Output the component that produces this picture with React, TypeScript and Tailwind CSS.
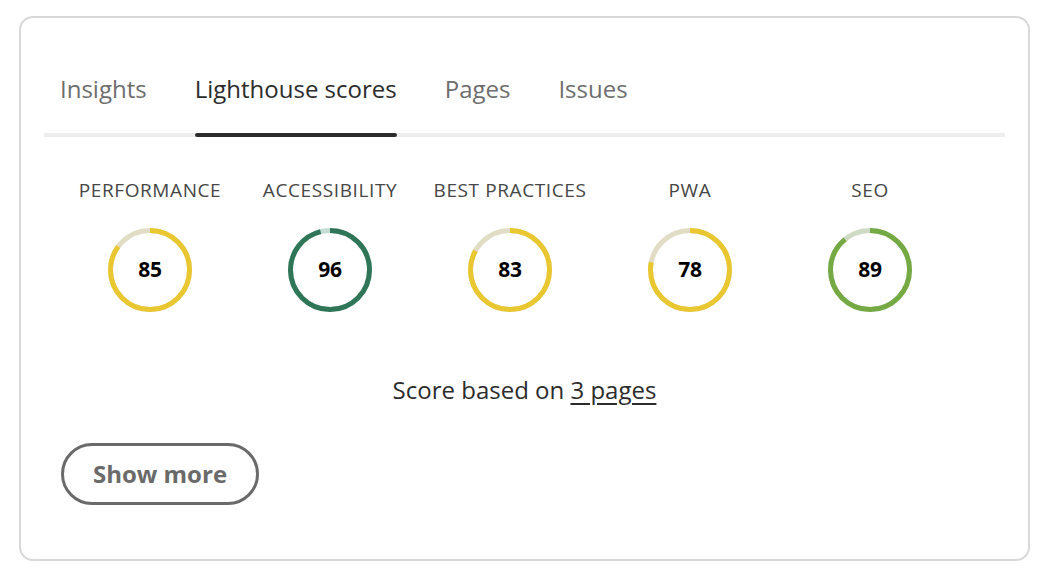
import { useState } from "react";

const tabs = ["Insights", "Lighthouse scores", "Pages", "Issues"];

const scores = [
  { label: "PERFORMANCE", value: 85, color: "#e9c731", track: "#e1ddc5" },
  { label: "ACCESSIBILITY", value: 96, color: "#2e7657", track: "#c5ddd3" },
  { label: "BEST PRACTICES", value: 83, color: "#e9c731", track: "#e1ddc5" },
  { label: "PWA", value: 78, color: "#e9c731", track: "#e1ddc5" },
  { label: "SEO", value: 89, color: "#74a944", track: "#cfdac4" },
];

const Ring = ({ value, color, track }: { value: number; color: string; track: string }) => {
  const r = 39.5;
  const c = 2 * Math.PI * r;
  return (
    <div className="relative h-[84px] w-[84px]">
      <svg width="84" height="84" viewBox="0 0 84 84" className="-rotate-90">
        <circle cx="42" cy="42" r={r} fill="none" stroke={track} strokeWidth="5" />
        <circle
          cx="42"
          cy="42"
          r={r}
          fill="none"
          stroke={color}
          strokeWidth="5"
          strokeDasharray={`${(c * value) / 100} ${c}`}
        />
      </svg>
      <span className="absolute inset-0 flex items-center justify-center text-[21px] font-bold tracking-[-0.3px] text-black">
        {value}
      </span>
    </div>
  );
};

export default function App() {
  const [active, setActive] = useState(1);

  return (
    <div className="h-[582px] w-[1054px] bg-white pt-[16px] pl-[19px] font-['Open_Sans',sans-serif]">
      <div className="h-[545px] w-[1011px] rounded-[14px] border-2 border-[#d8d8d8] px-[23px] pt-[55px]">
        <div className="flex gap-[48px] border-b-4 border-[#eeeeee] px-4">
          {tabs.map((t, i) => (
            <button
              key={t}
              onClick={() => setActive(i)}
              className={`relative pb-[28px] text-[24px] leading-[32px] ${
                i === active ? "text-[#2c2c2c]" : "text-[#6e6e6e]"
              }`}
            >
              {t}
              {i === active && (
                <span className="absolute bottom-[-4px] left-0 right-0 h-1 rounded-full bg-[#2c2c2c]" />
              )}
            </button>
          ))}
        </div>

        <div className="mt-[41px] ml-4 grid w-[900px] grid-cols-5">
          {scores.map((s) => (
            <div key={s.label} className="flex flex-col items-center">
              <div className="text-[19px] leading-[24px] tracking-[0.6px] text-[#464646]">{s.label}</div>
              <div className="mt-[26px]">
                <Ring value={s.value} color={s.color} track={s.track} />
              </div>
            </div>
          ))}
        </div>

        <p className="mt-[62px] text-center text-[24px] leading-[32px] text-[#2c2c2c]">
          Score based on{" "}
          <a href="#" className="underline underline-offset-4">
            3 pages
          </a>
        </p>

        <button className="mt-[37px] ml-[17px] flex h-[62px] w-[198px] items-center justify-center rounded-full border-[3px] border-[#6a6a6a] text-[24px] font-bold text-[#6a6a6a]">
          Show more
        </button>
      </div>
    </div>
  );
}
